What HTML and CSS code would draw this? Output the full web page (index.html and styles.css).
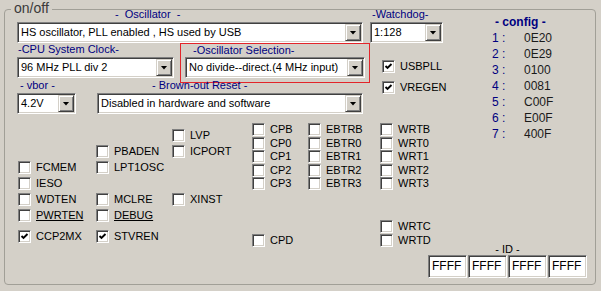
FILE: index.html
```html
<!DOCTYPE html>
<html lang="en">
<head>
    <meta charset="UTF-8">
    <title>Config bits</title>
    <link rel="stylesheet" href="styles.css">
</head>
<body>
    <div class="frame">
        <div class="legend">on/off</div>

        <!-- combo boxes -->
        <div class="group g-osc">
            <div class="cap">-  Oscillator  -</div>
            <div class="combo"><span class="combo-text">HS oscillator, PLL enabled , HS used by USB</span><span class="combo-btn"><i></i></span></div>
        </div>

        <div class="group g-wdt">
            <div class="cap">-Watchdog-</div>
            <div class="combo"><span class="combo-text">1:128</span><span class="combo-btn"><i></i></span></div>
        </div>

        <div class="group g-cpu">
            <div class="cap">-CPU System Clock-</div>
            <div class="combo"><span class="combo-text">96 MHz PLL div 2</span><span class="combo-btn"><i></i></span></div>
        </div>

        <div class="group g-sel">
            <div class="cap">-Oscillator Selection-</div>
            <div class="combo"><span class="combo-text">No divide--direct.(4 MHz input)</span><span class="combo-btn"><i></i></span></div>
        </div>

        <div class="group g-vbor">
            <div class="cap">- vbor -</div>
            <div class="combo"><span class="combo-text">4.2V</span><span class="combo-btn"><i></i></span></div>
        </div>

        <div class="group g-bor">
            <div class="cap">- Brown-out Reset -</div>
            <div class="combo"><span class="combo-text">Disabled in hardware and software</span><span class="combo-btn"><i></i></span></div>
        </div>

        <!-- checkbox columns -->
        <div class="col c-usb">
            <label class="chk"><span class="box on"><svg viewBox="0 0 9 9"><polyline points="1.5,4 3.5,6 7.5,2"/></svg></span>USBPLL</label>
            <label class="chk"><span class="box on"><svg viewBox="0 0 9 9"><polyline points="1.5,4 3.5,6 7.5,2"/></svg></span>VREGEN</label>
        </div>

        <div class="col c-a">
            <label class="chk"><span class="box"></span>FCMEM</label>
            <label class="chk"><span class="box"></span>IESO</label>
            <label class="chk"><span class="box"></span>WDTEN</label>
            <label class="chk"><span class="box"></span><u>PWRTEN</u></label>
            <label class="chk gap5"><span class="box on"><svg viewBox="0 0 9 9"><polyline points="1.5,4 3.5,6 7.5,2"/></svg></span>CCP2MX</label>
        </div>

        <div class="col c-b">
            <label class="chk"><span class="box"></span>PBADEN</label>
            <label class="chk"><span class="box"></span>LPT1OSC</label>
            <label class="chk skip1"><span class="box"></span>MCLRE</label>
            <label class="chk"><span class="box"></span><u>DEBUG</u></label>
            <label class="chk gap5"><span class="box on"><svg viewBox="0 0 9 9"><polyline points="1.5,4 3.5,6 7.5,2"/></svg></span>STVREN</label>
        </div>

        <div class="col c-c">
            <label class="chk"><span class="box"></span>LVP</label>
            <label class="chk"><span class="box"></span>ICPORT</label>
            <label class="chk skip2"><span class="box"></span>XINST</label>
        </div>

        <div class="col tight c-d">
            <label class="chk"><span class="box"></span>CPB</label>
            <label class="chk"><span class="box"></span>CP0</label>
            <label class="chk"><span class="box"></span>CP1</label>
            <label class="chk"><span class="box"></span>CP2</label>
            <label class="chk"><span class="box"></span>CP3</label>
            <label class="chk cpd"><span class="box"></span>CPD</label>
        </div>

        <div class="col tight c-e">
            <label class="chk"><span class="box"></span>EBTRB</label>
            <label class="chk"><span class="box"></span>EBTR0</label>
            <label class="chk"><span class="box"></span>EBTR1</label>
            <label class="chk"><span class="box"></span>EBTR2</label>
            <label class="chk"><span class="box"></span>EBTR3</label>
        </div>

        <div class="col tight c-f">
            <label class="chk"><span class="box"></span>WRTB</label>
            <label class="chk"><span class="box"></span>WRT0</label>
            <label class="chk"><span class="box"></span>WRT1</label>
            <label class="chk"><span class="box"></span>WRT2</label>
            <label class="chk"><span class="box"></span>WRT3</label>
            <label class="chk wrtc"><span class="box"></span>WRTC</label>
            <label class="chk"><span class="box"></span>WRTD</label>
        </div>

        <!-- config words -->
        <div class="config">
            <div class="config-title">- config -</div>
            <div class="cfg-row"><span class="cfg-n">1 :</span><span>0E20</span></div>
            <div class="cfg-row"><span class="cfg-n">2 :</span><span>0E29</span></div>
            <div class="cfg-row"><span class="cfg-n">3 :</span><span>0100</span></div>
            <div class="cfg-row"><span class="cfg-n">4 :</span><span>0081</span></div>
            <div class="cfg-row"><span class="cfg-n">5 :</span><span>C00F</span></div>
            <div class="cfg-row"><span class="cfg-n">6 :</span><span>E00F</span></div>
            <div class="cfg-row"><span class="cfg-n">7 :</span><span>400F</span></div>
        </div>

        <div class="id-group">
            <div class="id-cap">- ID -</div>
            <div class="id-row">
                <div class="id-box">FFFF</div>
                <div class="id-box">FFFF</div>
                <div class="id-box">FFFF</div>
                <div class="id-box">FFFF</div>
            </div>
        </div>
    </div>
</body>
</html>
```

FILE: styles.css
```css
body {
    margin: 0;
    width: 601px;
    height: 291px;
    overflow: hidden;
    background: #d4d0c8;
    font-family: "Liberation Sans", Arial, sans-serif;
    font-size: 11px;
    color: #000;
}

/* group box, inner origin is page (5,10) */
.frame {
    position: relative;
    margin: 9px 0 0 4px;
    width: 590px;
    height: 274px;
    border: 1px solid #a19f97;
    border-radius: 4px;
}

.legend {
    position: absolute;
    left: 6px;
    top: -10px;
    padding: 0 3px;
    background: #d4d0c8;
    font-size: 14px;
    line-height: 17px;
    color: #3a3a3a;
}

.group {
    position: absolute;
    display: flex;
    flex-direction: column;
}

.cap {
    height: 14px;
    line-height: 13px;
    color: #000080;
    white-space: pre;
}

.g-osc { left: 12px; top: -2px; width: 346px; }
.g-osc .cap { margin-left: 98px; }
.g-wdt { left: 365px; top: -2px; width: 73px; }
.g-wdt .cap { margin-left: 2px; }
.g-cpu { left: 12px; top: 33px; width: 157px; }
.g-cpu .cap { margin-left: 1px; }
.g-vbor { left: 12px; top: 69px; width: 59px; }
.g-vbor .cap { margin-left: 3px; }
.g-bor { left: 92px; top: 69px; width: 266px; }
.g-bor .cap { margin-left: 55px; }

.g-sel {
    left: 175px;
    top: 33px;
    width: 190px;
    height: 40px;
    box-sizing: border-box;
    padding: 0 4px;
    border: 1px solid #e3252a;
}
.g-sel .cap { height: 13px; margin-left: 8px; }

/* classic sunken combo */
.combo {
    display: flex;
    height: 21px;
    box-sizing: border-box;
    background: #fff;
    border: 1px solid;
    border-color: #808080 #fff #fff #808080;
    box-shadow: inset 1px 1px 0 #404040, inset -1px -1px 0 #d4d0c8;
    padding: 1px;
}

.combo-text {
    flex: 1;
    padding-left: 2px;
    line-height: 17px;
    white-space: nowrap;
    overflow: hidden;
}

.combo-btn {
    width: 16px;
    height: 17px;
    box-sizing: border-box;
    background: #d4d0c8;
    border: 1px solid;
    border-color: #d4d0c8 #404040 #404040 #d4d0c8;
    box-shadow: inset 1px 1px 0 #fff, inset -1px -1px 0 #808080;
    display: flex;
    align-items: center;
    justify-content: center;
}

.combo-btn i {
    width: 7px;
    height: 4px;
    background: #000;
    clip-path: polygon(0 0, 100% 0, 50% 100%);
}

/* checkboxes */
.col {
    position: absolute;
    display: flex;
    flex-direction: column;
}

.chk {
    display: flex;
    height: 16px;
    line-height: 13px;
    white-space: nowrap;
}

.tight .chk { height: 13.5px; }

.box {
    width: 13px;
    height: 13px;
    box-sizing: border-box;
    margin-right: 5px;
    background: #fff;
    border: 1px solid;
    border-color: #808080 #fff #fff #808080;
    box-shadow: inset 1px 1px 0 #404040, inset -1px -1px 0 #d4d0c8;
    flex-shrink: 0;
}

.box svg {
    display: block;
    width: 9px;
    height: 9px;
    margin: 1px;
}

.box polyline {
    fill: none;
    stroke: #000;
    stroke-width: 1.9;
}

.c-usb { left: 377px; top: 50px; gap: 8px; }
.c-usb .chk { height: 13px; }
.c-a { left: 13px; top: 151px; }
.c-b { left: 91px; top: 135px; }
.c-c { left: 167px; top: 119px; }
.c-d { left: 247px; top: 113px; }
.c-e { left: 303px; top: 113px; }
.c-f { left: 375px; top: 113px; }

.gap5 { margin-top: 5px; }
.skip1 { margin-top: 16px; }
.skip2 { margin-top: 32px; }
.cpd { margin-top: 43.5px; }
.wrtc { margin-top: 29.5px; }

/* config words */
.config {
    position: absolute;
    left: 487px;
    top: 5px;
}

.config-title {
    margin: 0 0 1px 3px;
    height: 14px;
    line-height: 14px;
    font-size: 12px;
    font-weight: bold;
    color: #000080;
}

.cfg-row {
    display: flex;
    height: 16px;
    line-height: 16px;
    font-size: 12px;
    color: #1a1a1a;
}

.cfg-n {
    width: 32px;
    color: #000080;
}

/* ID fields */
.id-group {
    position: absolute;
    left: 423px;
    top: 233px;
    width: 159px;
}

.id-cap {
    height: 12px;
    line-height: 12px;
    text-align: center;
}

.id-row {
    display: flex;
    gap: 1px;
}

.id-box {
    width: 39px;
    height: 23px;
    box-sizing: border-box;
    background: #fff;
    border: 1px solid;
    border-color: #808080 #fff #fff #808080;
    box-shadow: inset 1px 1px 0 #404040, inset -1px -1px 0 #d4d0c8;
    padding-left: 3px;
    font-size: 12px;
    line-height: 21px;
}
```
